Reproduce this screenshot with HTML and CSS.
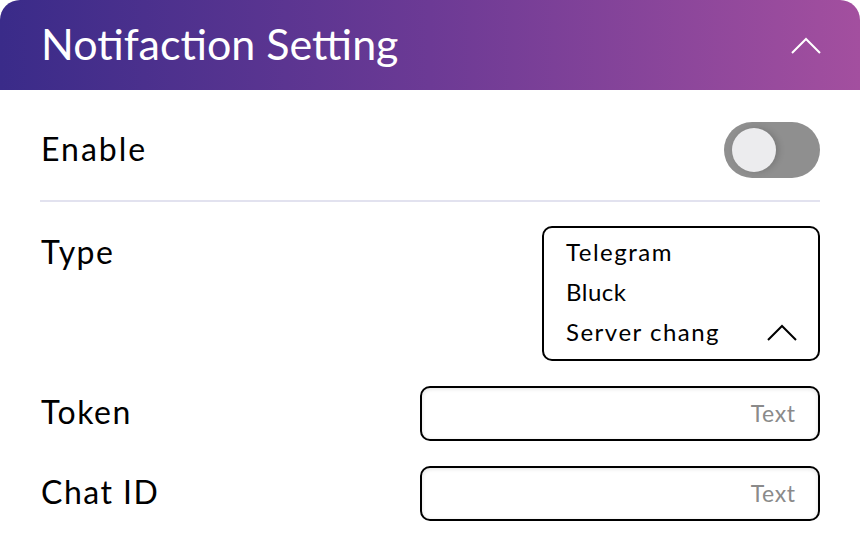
FILE: index.html
```html
<!DOCTYPE html>
<html>
<head>
<meta charset="utf-8">
<link rel="stylesheet" href="styles.css">
</head>
<body>
<div class="card">
  <div class="header">
    <h1 class="title">Notifaction Setting</h1>
    <svg class="chev-head" width="30" height="17" viewBox="0 0 30 17"><polyline points="1,16 15,2 29,16" fill="none" stroke="#fff" stroke-width="2"/></svg>
  </div>
  <div class="content">
    <div class="enable-row">
      <span class="label">Enable</span>
      <div class="toggle"><div class="knob"></div></div>
    </div>
    <div class="divider"></div>
    <div class="type-row">
      <span class="label type-label">Type</span>
      <div class="select">
        <div class="opt">Telegram</div>
        <div class="opt">Bluck</div>
        <div class="opt last">Server chang
          <svg class="chev-sel" width="30" height="17" viewBox="0 0 30 17"><polyline points="1,16 15,2 29,16" fill="none" stroke="#000" stroke-width="2"/></svg>
        </div>
      </div>
    </div>
    <div class="field-row">
      <span class="label">Token</span>
      <div class="input"><span class="ph">Text</span></div>
    </div>
    <div class="field-row">
      <span class="label">Chat ID</span>
      <div class="input"><span class="ph">Text</span></div>
    </div>
  </div>
</div>
</body>
</html>
```
FILE: styles.css
```css
html, body {
  margin: 0;
  padding: 0;
  background: #fff;
}
body {
  font-family: "Lato", "Liberation Sans", sans-serif;
  color: #000;
}
.card {
  width: 860px;
  height: 554px;
}
.header {
  height: 90px;
  box-sizing: border-box;
  padding: 0 39px 0 41px;
  display: flex;
  align-items: center;
  justify-content: space-between;
  border-radius: 20px 20px 0 0;
  background: linear-gradient(90deg, #3a2b89 0%, #6c3a95 50%, #a34f9f 100%);
}
.title {
  margin: 0;
  color: #fff;
  font-weight: 400;
  font-size: 43px;
  line-height: 1;
  padding-bottom: 4px;
}
.chev-head {
  display: block;
}
.content {
  padding: 0 40px 0 40px;
}
.label {
  font-size: 32px;
  line-height: 1;
  letter-spacing: 1.5px;
  padding-left: 1px;
}
.enable-row {
  display: flex;
  align-items: center;
  justify-content: space-between;
  padding: 32px 0 22px 0;
}
.enable-row .label {
  letter-spacing: 2px;
  margin-top: -3px;
}
.toggle {
  width: 96px;
  height: 56px;
  border-radius: 28px;
  background: #8f8f8f;
  box-sizing: border-box;
  padding: 6px 8px;
}
.knob {
  width: 44px;
  height: 44px;
  border-radius: 50%;
  background: #ececee;
  box-shadow: 3px 0 6px rgba(0,0,0,0.15);
}
.divider {
  height: 2px;
  background: #e2e2ef;
}
.type-row {
  display: flex;
  justify-content: space-between;
  align-items: flex-start;
  margin-top: 24px;
}
.type-label {
  line-height: 52px;
}
.select {
  width: 278px;
  box-sizing: border-box;
  border: 2px solid #000;
  border-radius: 10px;
  padding: 4px 21px 7px 22px;
}
.opt {
  font-size: 24px;
  line-height: 40px;
  letter-spacing: 1.5px;
  display: flex;
  align-items: center;
  justify-content: space-between;
}
.opt:nth-child(2) {
  letter-spacing: 0.5px;
}
.chev-sel {
  display: block;
}
.field-row {
  display: flex;
  justify-content: space-between;
  align-items: center;
  margin-top: 25px;
}
.field-row .label {
  margin-top: -3px;
}
.input {
  width: 400px;
  height: 55px;
  box-sizing: border-box;
  border: 2px solid #000;
  border-radius: 10px;
  box-shadow: inset 0 1px 4px rgba(0,0,0,0.12);
  display: flex;
  align-items: center;
  justify-content: flex-end;
  padding-right: 23px;
}
.ph {
  font-size: 23px;
  letter-spacing: 0.6px;
  margin-right: -0.6px;
  margin-top: -2px;
  color: #8a8a8a;
}
```
